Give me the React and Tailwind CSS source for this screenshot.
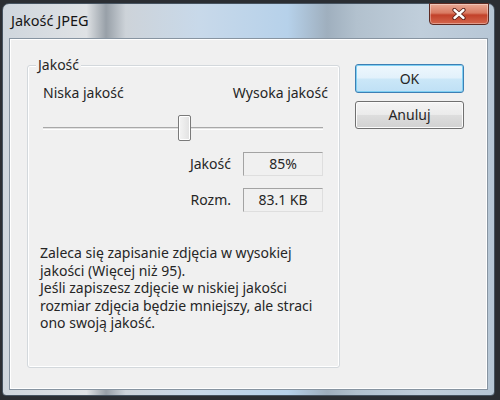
import React from 'react';

const CloseGlyph = () => (
  <svg width="14" height="12" viewBox="0 0 14 12">
    <path d="M2.5 2 L11.5 10 M11.5 2 L2.5 10" stroke="#5a2018" strokeWidth="4.2" strokeLinecap="round" />
    <path d="M2.5 2 L11.5 10 M11.5 2 L2.5 10" stroke="#ffffff" strokeWidth="2.4" strokeLinecap="round" />
  </svg>
);

export default function App() {
  return (
    <div className="w-[500px] h-[400px] bg-[#2b2e33] pt-[3px] pl-[2px] font-['Noto_Sans',sans-serif] text-[#262626]">
      <div className="w-[493px] h-[393px] rounded-t-[7px] rounded-b-[4px] border border-[#465360] bg-[linear-gradient(90deg,#cfd6dd_0%,#dfe2e5_17%,#98a0a8_21%,#cdd3d9_25%,#c8d9ea_40%,#b6d1ea_58%,#9fafbe_66%,#b2c1ce_72%,#c0cedb_85%,#b7c7d6_100%)] flex flex-col px-[6px] pb-[5px]">
        {/* title bar */}
        <div className="h-[34px] flex items-start justify-between">
          <span className="mt-[7px] ml-[2px] text-[14.5px] leading-[18px] text-[#151515]">Jakość JPEG</span>
          <button className="-mt-px -mr-px w-[60px] h-[22px] rounded-b-[4px] border border-[#5e2a22] bg-[linear-gradient(180deg,#e9a894_0%,#d97a62_45%,#c2412a_55%,#d4664c_100%)] shadow-[inset_0_0_0_1px_rgba(255,255,255,0.35)] flex items-center justify-center">
            <CloseGlyph />
          </button>
        </div>

        {/* client area */}
        <div className="flex-1 border border-[#8794a1] bg-[#f0f0f0] shadow-[inset_0_0_0_1px_#ffffff] flex pt-[26px] pl-[17px]">
          {/* group box */}
          <div className="relative w-[313px] h-[303px] rounded-[3px] border border-[#d3d8dc] shadow-[inset_0_0_0_1px_#ffffff] flex flex-col">
            <span className="absolute left-[8px] -top-[10px] px-[2px] bg-[#f0f0f0] text-[14px] leading-[18px]">Jakość</span>

            <div className="flex justify-between pt-[18px] pl-[15px] pr-[11px] text-[14px] leading-[18px]">
              <span>Niska jakość</span>
              <span>Wysoka jakość</span>
            </div>

            {/* slider */}
            <div className="relative mt-[13px] ml-[15px] mr-[16px] h-[26px] flex items-center">
              <div className="w-full h-[3px] border-t border-[#a8a8a8] border-b border-b-white bg-[#e2e2e2]" />
              <div className="absolute left-[135px] top-0 w-[13px] h-[26px] rounded-[2px] border border-[#7a7a7a] bg-[linear-gradient(90deg,#f4f4f4,#e1e1e1)] shadow-[inset_0_0_0_1px_#ffffff]" />
            </div>

            {/* value fields */}
            <div className="mt-[11px] pr-[16px] flex flex-col items-end gap-[12px] text-[14px]">
              <div className="flex items-center gap-[12px]">
                <span className="leading-[18px]">Jakość</span>
                <div className="w-[80px] h-[24px] border border-[#a3a3a3] border-r-[#dedede] border-b-[#dedede] flex items-center justify-center leading-[18px]">85%</div>
              </div>
              <div className="flex items-center gap-[12px]">
                <span className="leading-[18px]">Rozm.</span>
                <div className="w-[80px] h-[24px] border border-[#a3a3a3] border-r-[#dedede] border-b-[#dedede] flex items-center justify-center leading-[18px]">83.1 KB</div>
              </div>
            </div>

            <p className="mt-[32px] pl-[12px] pr-[4px] text-[14px] leading-[17.5px] whitespace-nowrap">
              Zaleca się zapisanie zdjęcia w wysokiej<br />
              jakości (Więcej niż 95).<br />
              Jeśli zapiszesz zdjęcie w niskiej jakości<br />
              rozmiar zdjęcia będzie mniejszy, ale straci<br />
              ono swoją jakość.
            </p>
          </div>

          {/* buttons */}
          <div className="ml-[15px] -mt-px flex flex-col gap-[8px]">
            <button className="w-[109px] h-[29px] rounded-[3px] border border-[#3d7fb4] bg-[linear-gradient(180deg,#eef7fd_0%,#e2f1fb_48%,#cbe7f8_52%,#bfe0f5_100%)] shadow-[inset_0_0_0_1px_#7fd0f3] text-[14px] leading-[18px]">OK</button>
            <button className="w-[109px] h-[28px] rounded-[3px] border border-[#707070] bg-[linear-gradient(180deg,#f4f4f4_0%,#ebebeb_48%,#dddddd_52%,#d1d1d1_100%)] shadow-[inset_0_0_0_1px_#fbfbfb] text-[14px] leading-[18px]">Anuluj</button>
          </div>
        </div>
      </div>
    </div>
  );
}
